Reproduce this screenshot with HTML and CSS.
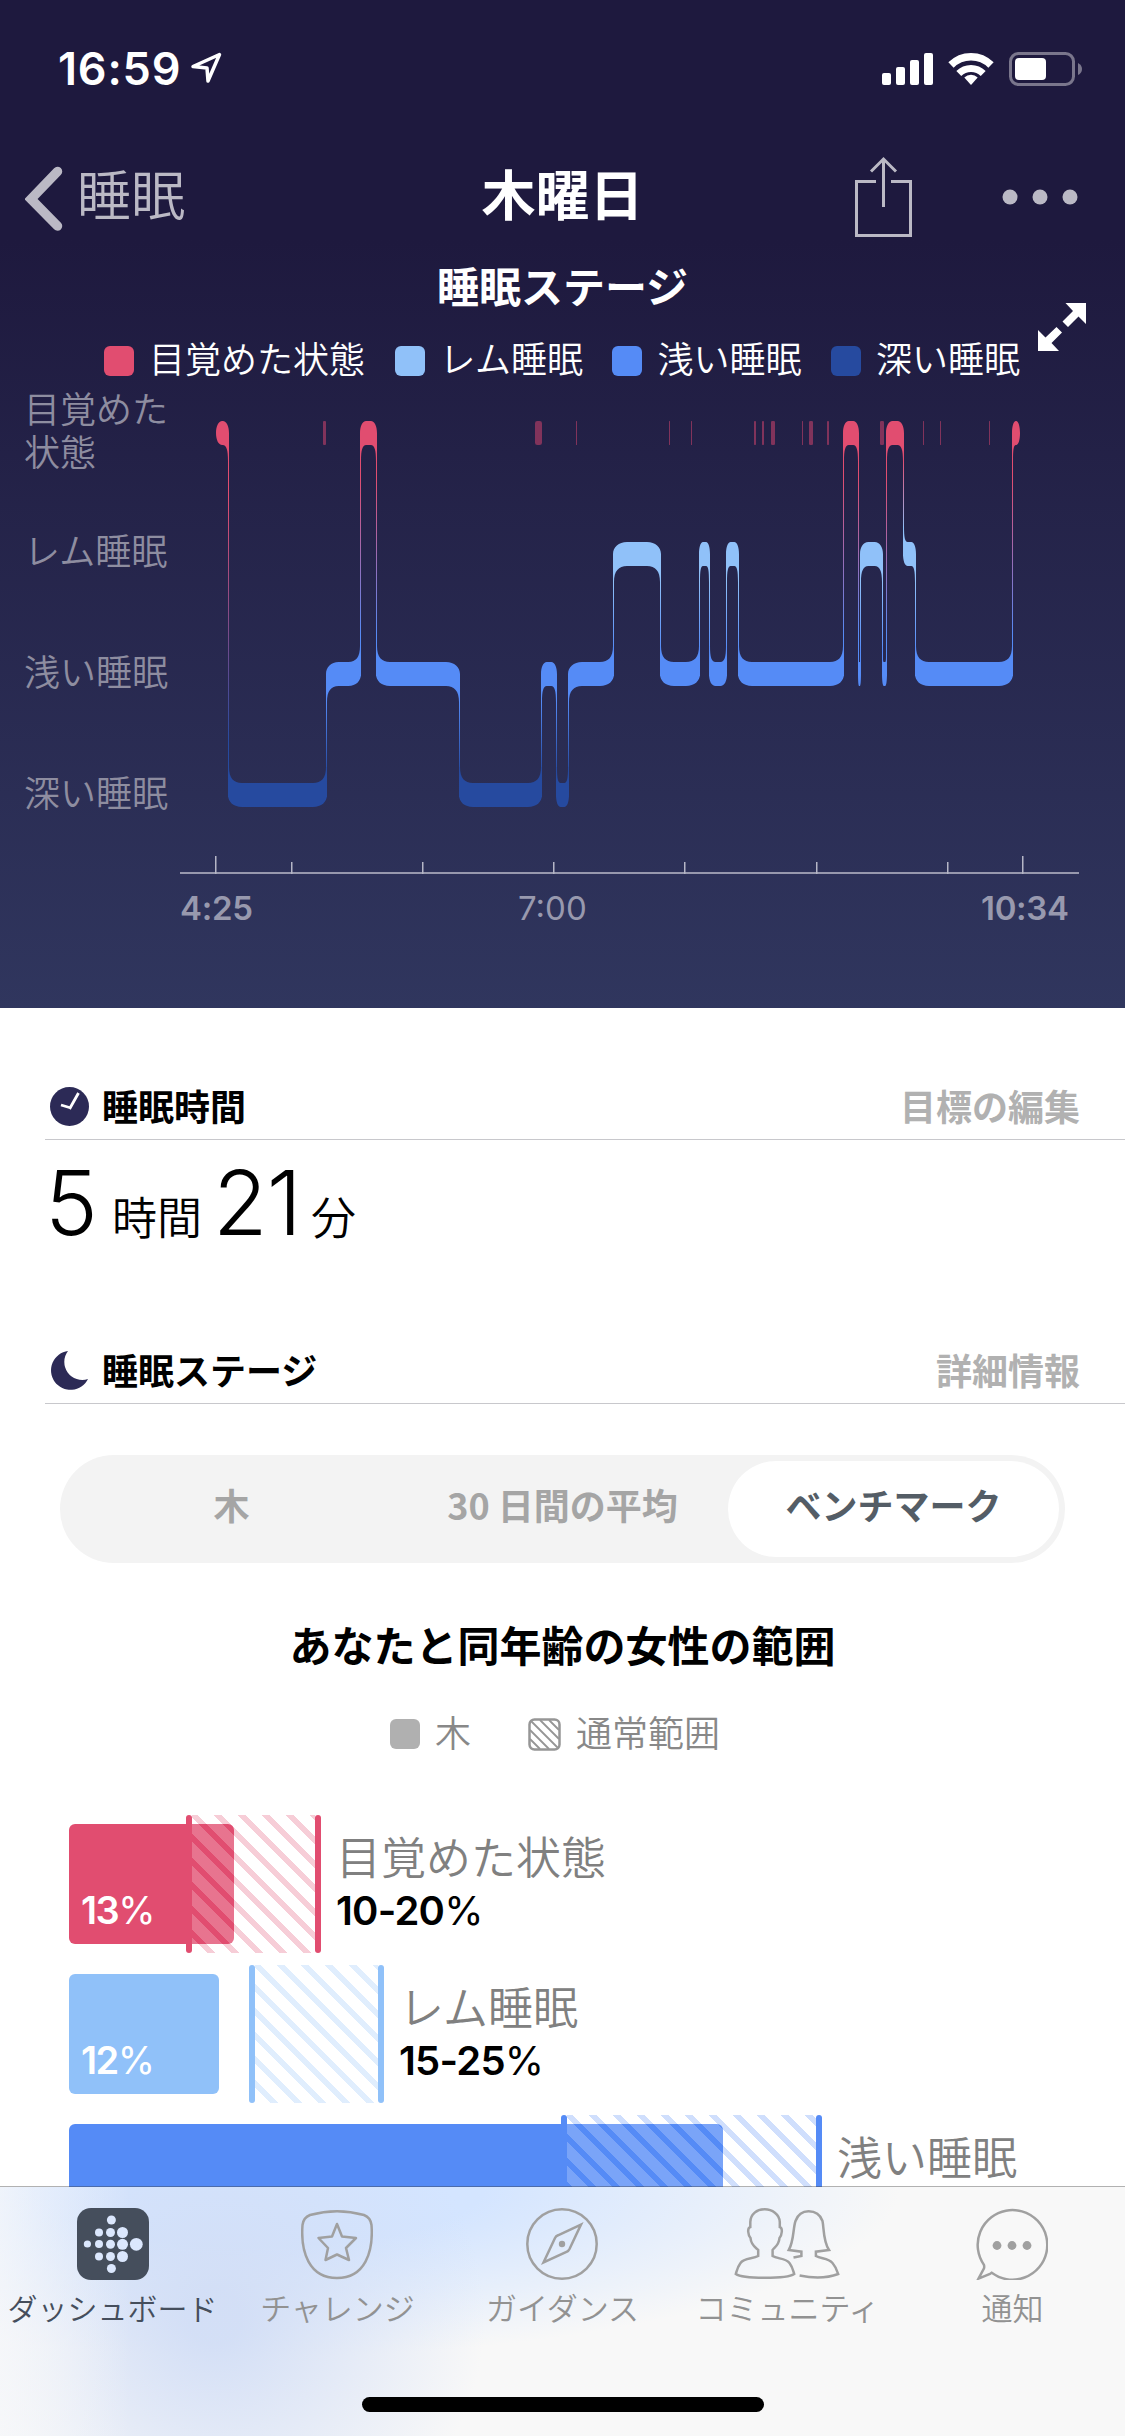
FILE: index.html
```html
<!DOCTYPE html>
<html lang="ja">
<head>
<meta charset="utf-8">
<title>睡眠</title>
<link rel="stylesheet" href="styles.css">
</head>
<body>
<div class="screen">
  <header class="hero">
    <div class="status">
      <span class="status-time">16:59</span>
      <svg class="status-location" width="32" height="32" viewBox="0 0 32 32"><path d="M29.500 2.500L3 14.500L17 16L18 29Z"/></svg>
      <svg class="status-icons" width="202" height="36" viewBox="0 0 202 36">
        <g fill="#fff">
          <rect x="0" y="21" width="9" height="12" rx="2"/><rect x="14" y="15" width="9" height="18" rx="2"/>
          <rect x="28" y="8" width="9" height="25" rx="2"/><rect x="42" y="1" width="9" height="32" rx="2"/>
          <path d="M89 33L82.300 25.600A9.500 9.500 0 0 1 95.700 25.600Z"/>
          <rect x="133" y="6" width="31" height="22" rx="4"/>
        </g>
        <g fill="none" stroke="#fff"><path d="M69 13A28.300 28.300 0 0 1 109 13" stroke-width="7.500"/><path d="M76.800 21.500A17.300 17.300 0 0 1 101.200 21.500" stroke-width="7"/></g>
        <rect x="128.500" y="1.500" width="63" height="31" rx="8" fill="none" stroke="#7a768c" stroke-width="3"/>
        <path d="M196 11Q200 13 200 17Q200 21 196 23Z" fill="#7a768c"/>
      </svg>
    </div>
    <nav class="nav">
      <a class="nav-back"><svg width="38" height="66" viewBox="0 0 38 66"><path d="M32.500 5.500L6 33L32.500 60"/></svg><span>睡眠</span></a>
      <h1 class="nav-title">木曜日</h1>
      <div class="nav-actions">
        <svg width="58" height="82" viewBox="0 0 58 82"><path d="M21 25.500H1.500V79.500H55.500V25.500H36M28.500 51V3M16 15.500L28.500 3L41 15.500"/></svg>
        <svg class="nav-more" width="76" height="16" viewBox="0 0 76 16"><circle cx="8" cy="8" r="7.500"/><circle cx="38" cy="8" r="7.500"/><circle cx="68" cy="8" r="7.500"/></svg>
      </div>
    </nav>
    <h2 class="chart-title">睡眠ステージ</h2>
    <svg class="expand" width="48" height="48" viewBox="0 0 48 48"><path d="M48 0V21L40.500 13.500L30 24L24.500 18.500L35 8L27.500 0ZM0 48V27L7.500 34.500L18.500 24L24 29.500L13.500 40L21 48Z"/></svg>
    <div class="legend">
      <span class="legend-item"><i class="swatch awake"></i>目覚めた状態</span>
      <span class="legend-item"><i class="swatch rem"></i>レム睡眠</span>
      <span class="legend-item"><i class="swatch light"></i>浅い睡眠</span>
      <span class="legend-item"><i class="swatch deep"></i>深い睡眠</span>
    </div>
    <div class="chart">
      <div class="y-labels"><span>目覚めた<br>状態</span><span>レム睡眠</span><span>浅い睡眠</span><span>深い睡眠</span></div>
      <svg id="hypnogram" width="945" height="490" viewBox="180 388 945 490"></svg>
    </div>
    <div class="x-labels"><b>4:25</b><span>7:00</span><b>10:34</b></div>
  </header>

  <main>
    <section class="duration">
      <div class="section-head">
        <svg width="39" height="39" viewBox="0 0 39 39"><circle cx="19.500" cy="19.500" r="19.500" fill="#2c2a56"/><path d="M28.500 6L19.500 22M11 18L21 21" fill="none" stroke="#fff" stroke-width="2.800"/></svg>
        <h3>睡眠時間</h3><a>目標の編集</a>
      </div>
      <p class="duration-value"><span class="num five">5</span><span class="unit hours">時間</span><span class="num minutes">21</span><span class="unit">分</span></p>
    </section>
    <section class="stages">
      <div class="section-head">
        <svg width="39" height="39" viewBox="0 0 39 39"><path d="M18 0A19.500 19.500 0 1 0 38 28A18 18 0 0 1 18 0Z" fill="#2c2a56"/></svg>
        <h3>睡眠ステージ</h3><a>詳細情報</a>
      </div>
      <div class="tabs"><span>木</span><span>30 日間の平均</span><span class="selected">ベンチマーク</span></div>
      <h2 class="range-title">あなたと同年齢の女性の範囲</h2>
      <div class="range-legend">
        <i class="swatch today"></i><span>木</span>
        <svg width="33" height="33" viewBox="0 0 33 33"><rect x="1.500" y="1.500" width="30" height="30" rx="5"/><path d="M2 21L12 31M2 12L21 31M3 3L30 30M12 2L31 21M21 2L31 12"/></svg><span>通常範囲</span>
      </div>
      <div class="bars">
        <div class="bar-row awake-row">
          <div class="plot" style="width:252px"><div class="bar" style="width:165px">13<i>%</i></div><div class="range" style="width:135px"></div></div>
          <div class="bar-text"><span>目覚めた状態</span><b>10-20<i>%</i></b></div>
        </div>
        <div class="bar-row rem-row">
          <div class="plot" style="width:315px"><div class="bar" style="width:150px">12<i>%</i></div><div class="range" style="width:135px"></div></div>
          <div class="bar-text"><span>レム睡眠</span><b>15-25<i>%</i></b></div>
        </div>
        <div class="bar-row light-row">
          <div class="plot" style="width:753px"><div class="bar" style="width:654px"></div><div class="range" style="width:261px"></div></div>
          <div class="bar-text"><span>浅い睡眠</span></div>
        </div>
      </div>
    </section>
  </main>

  <footer class="tabbar">
    <a class="tab active">
      <svg width="72" height="72" viewBox="0 0 72 72"><rect width="72" height="72" rx="14" fill="#454e5c"/><g fill="#dbe7fd"><circle cx="34.400" cy="12" r="4.500"/><circle cx="22" cy="24.500" r="4"/><circle cx="33.500" cy="24.500" r="4.500"/><circle cx="45.500" cy="24.500" r="5.500"/><circle cx="10.400" cy="36" r="3.600"/><circle cx="22" cy="36" r="4"/><circle cx="33.500" cy="36.300" r="4.500"/><circle cx="45.500" cy="36.300" r="5.500"/><circle cx="59.300" cy="36.300" r="6.400"/><circle cx="22" cy="48.500" r="4"/><circle cx="33.500" cy="48.500" r="4.500"/><circle cx="45.500" cy="48.500" r="5.500"/><circle cx="34.400" cy="60.500" r="4.500"/></g></svg>
      <span>ダッシュボード</span>
    </a>
    <a class="tab">
      <svg class="line" width="72" height="72" viewBox="0 0 72 72"><path d="M9 7Q36 -.500 63 7Q69.500 9.500 70.500 17C72.500 44 64 70 36 70C8 70 -.500 44 1.500 17Q2.500 9.500 9 7Z"/><path d="M36 16L41 28.500L55 30L45 40L48 52L36 46.500L24.500 52L27 40L17.500 30L31 28.500Z" stroke-linejoin="round"/></svg>
      <span>チャレンジ</span>
    </a>
    <a class="tab">
      <svg class="line" width="72" height="72" viewBox="0 0 72 72"><circle cx="36" cy="36" r="34.700"/><path d="M17.500 54.500L29 30Q30 28 32 27.300L55 16.500L43.500 41Q42.500 43 41 43.700Z"/><circle class="dot" cx="36" cy="36" r="3.200"/></svg>
      <span>ガイダンス</span>
    </a>
    <a class="tab">
      <svg class="line" width="106" height="72" viewBox="-1 0 106 72"><path d="M29.700 1.300C37 1.300 44.500 6 44.800 14V19C48 20 47 27 44.500 30C44 37 40 39 37.600 42V48C42 51 51 50 54.500 55C57.500 59 58 62 59.200 66C52 71 8 71 .800 66C2 62 2.500 59 5.500 55C9 50 18 51 23.200 48V42C20 39 16 37 15.500 30C13 27 12 20 15.300 19V14C15.500 6 22 1.300 29.700 1.300Z"/><path d="M58.500 49.500L66.400 48V43.700L53.800 42C59 33 58 20 60.500 13Q64 3.300 73.600 3.300Q84 3.300 87.500 13C89 20 88 33 94 42L80.900 43.700V48C86 51 93 50 97.500 55C101 59 102 62 103.200 66Q87 72 64.600 67.500"/></svg>
      <span>コミュニティ</span>
    </a>
    <a class="tab">
      <svg class="line" width="72" height="72" viewBox="0 0 72 72"><path d="M15.700 64.500A34.800 34.800 0 1 0 7.800 56.300Q8.500 58 8 60L2.500 70.300L14 65.500Q15 65 15.700 64.500Z" transform="translate(0 .3)"/><g class="dot"><circle cx="21" cy="37.500" r="4.400"/><circle cx="36" cy="37.500" r="4.400"/><circle cx="51" cy="37.500" r="4.400"/></g></svg>
      <span>通知</span>
    </a>
    <div class="home-indicator"></div>
  </footer>
</div>
<script src="chart.js"></script>
</body>
</html>
```
FILE: styles.css
```css
* { box-sizing: border-box; }
body { margin: 0; font-family: "Noto Sans CJK JP", sans-serif; font-size: 36px; color: #000; background: #fff; }
h1, h2, h3, p { margin: 0; }
svg { display: block; flex: none; }
.screen { position: relative; width: 1125px; height: 2436px; overflow: hidden; }

.hero { height: 1008px; color: #fff; background: linear-gradient(#1e193e 0, #1e193e 240px, #30365e 1008px); }
.status { display: flex; height: 137px; padding: 0 41px 0 58px; }
.status-time { width: 132px; margin-top: 40px; font: 600 45px/58px Inter, sans-serif; letter-spacing: .8px; }
.status-location { margin-top: 52px; fill: none; stroke: #fff; stroke-width: 3.5; stroke-linejoin: round; }
.status-icons { margin: 52px 0 0 auto; }

.nav { display: grid; grid-template-columns: 1fr auto 1fr; align-items: center; height: 117px; padding: 0 47px 0 25px; }
.nav-back { display: flex; align-items: center; font-size: 54px; line-height: 60px; color: #bbb9c5; font-weight: 350; }
.nav-back svg { margin-top: 6px; fill: none; stroke: #bbb9c5; stroke-width: 9.5; stroke-linecap: round; stroke-linejoin: miter; }
.nav-back span { margin: -6px 0 0 14px; }
.nav-title { margin: -5px -22px 0 0; font-size: 54px; line-height: 60px; font-weight: 700; }
.nav-actions { display: flex; align-items: center; justify-content: flex-end; }
.nav-actions svg { margin-top: 2px; fill: none; stroke: #bbb9c5; stroke-width: 3; }
.nav-actions .nav-more { margin: 2px 0 0 89px; fill: #bbb9c5; stroke: none; }

.chart-title { height: 80px; font-size: 42px; line-height: 62px; text-align: center; }
.expand { position: absolute; left: 1038px; top: 303px; fill: #fff; }
.legend { display: flex; gap: 28.6px; height: 54px; padding-left: 104px; font-weight: 350; line-height: 47px; white-space: nowrap; }
.legend-item { display: flex; gap: 15px; margin-right: 1px; }
.legend-item + .legend-item { margin-right: 1px; }
.swatch { width: 30px; height: 30px; margin-top: 12px; border-radius: 6px; }
.awake { background: #e14d70; }
.rem { background: #90c1f9; }
.light { background: #558bf6; }
.deep { background: #264a9f; }
.chart { display: flex; }
.y-labels { display: flex; flex-direction: column; width: 180px; padding-left: 24px; line-height: 43px; font-weight: 350; color: #8e8da0; }
.y-labels span { margin-bottom: 78px; }
.y-labels span:first-child { margin: -2px 0 56px; }
.x-labels { display: grid; grid-template-columns: 338px 463px auto; padding: 4px 0 0 180px; margin-top: -12px; font: 400 33px/50px Inter, sans-serif; color: #9899ae; }
.x-labels b { font-weight: 600; letter-spacing: -.3px; }

.section-head { display: flex; align-items: center; height: 132px; padding: 66px 45px 0 5px; margin-left: 45px; border-bottom: 1px solid #c8c8cc; }
.section-head h3 { margin-left: 13px; font-size: 36px; line-height: 50px; margin-top: -4px; }
.section-head a { margin: -4px 0 0 auto; color: #b1b1b1; font-weight: 700; line-height: 50px; }
.duration { height: 264px; }
.duration-value { display: flex; align-items: baseline; padding-left: 45px; margin-top: -3px; line-height: 132px; }
.num { font-family: Inter, sans-serif; font-size: 89px; font-weight: 300; }
.unit { font-size: 45px; font-weight: 350; }
.five { width: 67px; }
.hours { width: 101px; }
.minutes { width: 98px; letter-spacing: -1px; }

.tabs { display: grid; grid-template-columns: repeat(3, 1fr); width: 1005px; height: 108px; margin: 51px 0 0 60px; padding: 6px; border-radius: 54px; background: #f3f3f3; color: #a5a5a5; font-weight: 700; line-height: 86px; text-align: center; }
.selected { border-radius: 48px; background: #fff; color: #545d66; }
.range-title { margin-top: 50px; font-size: 42px; line-height: 62px; text-align: center; }
.range-legend { display: flex; align-items: center; height: 50px; margin-top: 34px; padding-left: 390px; font-weight: 350; line-height: 50px; color: #888; }
.range-legend .swatch { margin-top: 0; background: #b0b0b0; }
.range-legend span { margin: -6px 0 0 15px; }
.range-legend svg { margin-left: 57px; fill: none; stroke: #969696; stroke-width: 1.8; }
.range-legend rect { stroke-width: 2.5; }

.bars { padding: 56px 0 0 69px; }
.bar-row { display: flex; height: 150px; }
.awake-row { --stage: #e14d70; --stripe: rgba(225, 77, 112, .28); }
.rem-row { --stage: #90c1f9; --stripe: rgba(144, 193, 249, .28); }
.light-row { --stage: #558bf6; --stripe: rgba(85, 139, 246, .28); }
.plot { display: grid; align-items: center; height: 138px; }
.plot > * { grid-area: 1 / 1; }
.bar { height: 120px; padding: 61px 0 0 12px; border-radius: 6px; background: var(--stage); color: #fff; font: 600 38px/50px Inter, sans-serif; letter-spacing: -1.5px; }
.bar i, .bar-text i { font-style: normal; font-weight: 400; }
.range { position: relative; justify-self: end; height: 138px; padding: 0 6px; background: repeating-linear-gradient(45deg, rgba(255,255,255,.22) 0 11.3px, var(--stripe) 11.3px 16.97px) content-box; }
.range::before, .range::after { content: ""; position: absolute; top: 0; width: 6px; height: 138px; border-radius: 3px; background: var(--stage); }
.range::before { left: 0; }
.range::after { right: 0; }
.bar-text { display: flex; flex-direction: column; margin: 11px 0 0 15px; font-size: 45px; font-weight: 350; line-height: 60px; color: #808080; }
.bar-text b { margin-top: -3px; color: #000; font: 600 40px/56px Inter, sans-serif; letter-spacing: -.8px; }

.tabbar { position: absolute; left: 0; top: 2186px; display: grid; grid-template-columns: repeat(5, 1fr); width: 1125px; height: 250px; padding-top: 21px; border-top: 1px solid rgba(60,60,60,.4); font-size: 31px; line-height: 44px; font-weight: 350; color: #929292;
  background: linear-gradient(90deg, rgba(247,248,250,.75), rgba(247,248,250,0) 130px), radial-gradient(ellipse 270px 260px at 215px 130px, rgba(210,222,246,.95) 10%, rgba(210,222,246,0)), radial-gradient(ellipse 640px 170px at 260px 0, #d4e5ff 35%, rgba(218,232,255,0)), #f8f8f8; background-clip: padding-box; }
.tab { display: flex; flex-direction: column; align-items: center; gap: 5px; white-space: nowrap; }
.tab svg { position: relative; left: -1px; }
.active { font-size: 30px; color: #454e5c; }
.active svg { left: 0; }
.line { fill: none; stroke: #a0a0a0; stroke-width: 2.5; }
.dot { fill: #a0a0a0; stroke: none; }
.home-indicator { position: absolute; left: 362px; bottom: 24px; width: 402px; height: 15px; border-radius: 8px; background: #000; }
```
FILE: chart.js
```js
const STAGES = {
  awake: { y: 421, color: '#e14d70' },
  rem: { y: 542, color: '#90c1f9' },
  light: { y: 662, color: '#558bf6' },
  deep: { y: 783, color: '#264a9f' },
};
const H = 24;

// [stage, start, end]
const segments = [
  ['awake', 216, 229], ['deep', 228, 327], ['light', 326, 361], ['awake', 360, 377],
  ['light', 376, 460], ['deep', 459, 542], ['light', 541, 557], ['deep', 556, 569],
  ['light', 568, 614], ['rem', 613, 661], ['light', 660, 700], ['rem', 699, 710],
  ['light', 709, 727], ['rem', 726, 739], ['light', 738, 844], ['awake', 843, 859],
  ['light', 858, 861], ['rem', 860, 883], ['light', 882, 887], ['awake', 886, 904],
  ['rem', 903, 916], ['light', 915, 1013], ['awake', 1012, 1020],
];
// [start, width] of brief awakenings
const blips = [[323, 3], [535, 7], [576, 1], [669, 1], [691, 1], [754, 2], [762, 2], [771, 4],
  [802, 1], [809, 4], [827, 2], [880, 4], [923, 1], [940, 1], [989, 1]];
const ticks = [[215, 856], [291, 862], [422, 862], [553, 862], [684, 862], [816, 862], [947, 862], [1022, 856]];

function segmentPath([stage, x0, x1], i) {
  const y = STAGES[stage].y, b = y + H, w = x1 - x0;
  const link = n => !segments[n] ? 'none' : STAGES[segments[n][0]].y < y ? 'up' : 'down';
  const single = !segments[i - 1] || !segments[i + 1];
  const rx = Math.min(14, w * (single ? 0.48 : 0.36));
  // Edge points from bottom to top; dir is 1 on the left edge, -1 on the right.
  const edge = (x, dir, l) => {
    const inX = x + dir, out = x + rx * dir, c = rx * 0.4 * dir;
    const low = l === 'down'
      ? [['P', out, b], ['C', x + c, b, inX, b + 5, inX, b + 16], ['P', x, b + 16]]
      : [['P', out, b], ['C', x + c, b, x, b - 5, x, b - 12]];
    const high = l === 'up'
      ? [['P', x, y - 16], ['P', inX, y - 16], ['C', inX, y - 5, x + c, y, out, y]]
      : [['P', x, y + 12], ['C', x, y + 5, x + c, y, out, y]];
    return low.concat(high);
  };
  const fwd = list => list.map(p => (p[0] === 'P' ? 'L' : 'C') + p.slice(1).join(' ')).join('');
  const left = edge(x0, 1, link(i - 1));
  const right = edge(x1, -1, link(i + 1));
  // Walk the right edge downwards by reversing its point list.
  let back = '';
  const cur = right[right.length - 1].slice(-2);
  for (let n = right.length - 1; n > 0; n--) {
    const p = right[n], prev = right[n - 1].slice(-2);
    back += p[0] === 'C' ? `C${p[3]} ${p[4]} ${p[1]} ${p[2]} ${prev.join(' ')}` : `L${prev.join(' ')}`;
  }
  return 'M' + left[0].slice(1).join(' ') + fwd(left.slice(1)) + 'L' + cur.join(' ') + back + 'Z';
}

let defs = '', out = '';
blips.forEach(([x, w]) => { out += `<rect x="${x}" y="421" width="${w}" height="24" rx="${Math.min(w / 3, 3)}" fill="#81335b"/>`; });
segments.forEach((s, i) => {
  const next = segments[i + 1];
  if (next) {
    const [a, c] = [STAGES[s[0]], STAGES[next[0]]].sort((m, n) => m.y - n.y);
    defs += `<linearGradient id="g${i}" gradientUnits="userSpaceOnUse" x1="0" x2="0" y1="${a.y + H}" y2="${c.y}"><stop offset=".15" stop-color="${a.color}"/><stop offset=".88" stop-color="${c.color}"/></linearGradient>`;
    out += `<rect x="${next[1]}" y="${a.y + 14}" width="1" height="${c.y - a.y}" fill="url(#g${i})"/>`;
  }
});
segments.forEach((s, i) => { out += `<path d="${segmentPath(s, i)}" fill="${STAGES[s[0]].color}"/>`; });
out += '<rect x="180" y="872" width="899" height="2" fill="#9798ad"/>';
ticks.forEach(([x, y]) => { out += `<rect x="${x}" y="${y}" width="1.5" height="${874 - y}" fill="#b5b6c6"/>`; });
document.getElementById('hypnogram').innerHTML = `<defs>${defs}</defs>${out}`;
```
